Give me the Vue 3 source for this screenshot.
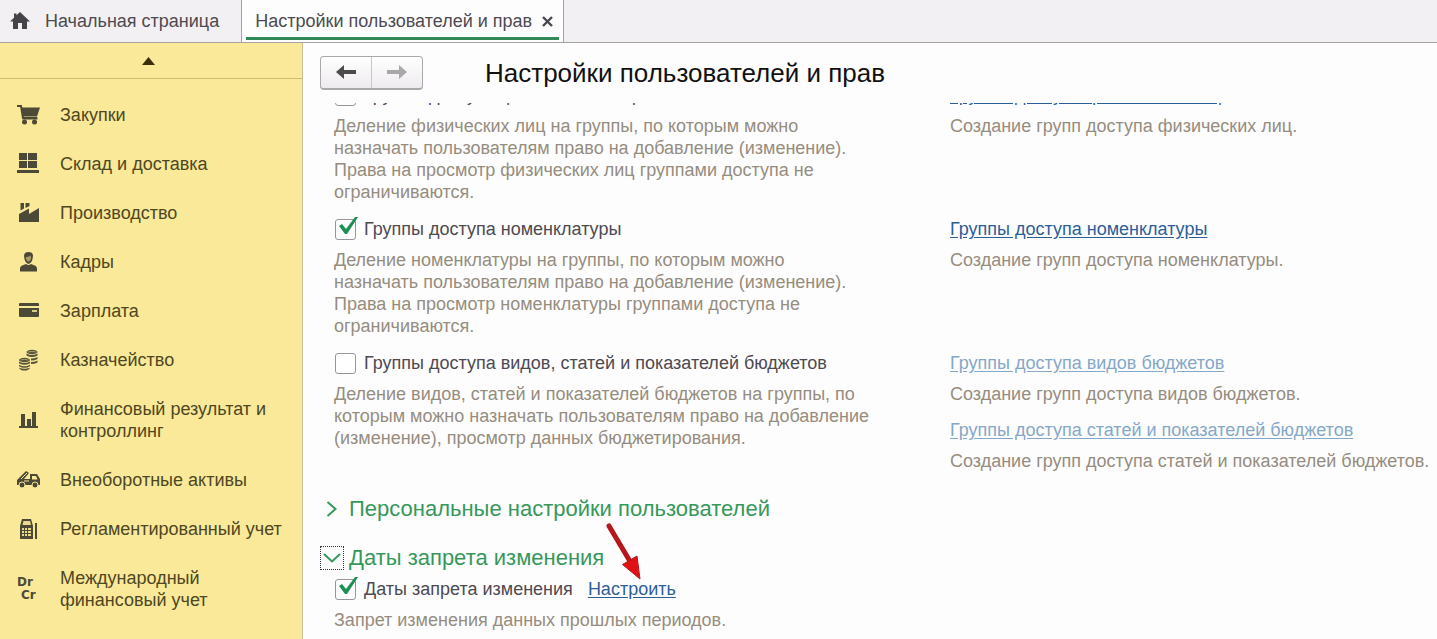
<script setup>
import { ref } from 'vue'

const menu = [
  { id: 'cart', label: 'Закупки' },
  { id: 'stock', label: 'Склад и доставка' },
  { id: 'factory', label: 'Производство' },
  { id: 'person', label: 'Кадры' },
  { id: 'card', label: 'Зарплата' },
  { id: 'coins', label: 'Казначейство' },
  { id: 'chart', label: 'Финансовый результат и контроллинг' },
  { id: 'truck', label: 'Внеоборотные активы' },
  { id: 'calc', label: 'Регламентированный учет' },
  { id: 'drcr', label: 'Международный финансовый учет' },
]

const rows = ref([
  {
    id: 'people',
    label: 'Группы доступа физических лиц',
    checked: false,
    text: 'Деление физических лиц на группы, по которым можно назначать пользователям право на добавление (изменение). Права на просмотр физических лиц группами доступа не ограничиваются.',
    links: [{ title: 'Группы доступа физических лиц', text: 'Создание групп доступа физических лиц.' }],
  },
  {
    id: 'items',
    label: 'Группы доступа номенклатуры',
    checked: true,
    text: 'Деление номенклатуры на группы, по которым можно назначать пользователям право на добавление (изменение). Права на просмотр номенклатуры группами доступа не ограничиваются.',
    links: [{ title: 'Группы доступа номенклатуры', text: 'Создание групп доступа номенклатуры.' }],
  },
  {
    id: 'budgets',
    label: 'Группы доступа видов, статей и показателей бюджетов',
    checked: false,
    muted: true,
    text: 'Деление видов, статей и показателей бюджетов на группы, по которым можно назначать пользователям право на добавление (изменение), просмотр данных бюджетирования.',
    links: [
      { title: 'Группы доступа видов бюджетов', text: 'Создание групп доступа видов бюджетов.' },
      { title: 'Группы доступа статей и показателей бюджетов', text: 'Создание групп доступа статей и показателей бюджетов.' },
    ],
  },
])
const datesLocked = ref(true)
</script>

<template>
  <div class="app">
    <nav class="tabs">
      <a class="tab home" href="#">
        <svg width="20" height="18" viewBox="0 0 20 18"><path d="M10 0 20 9.500H17V17H12V11H8V17H3V9.500H0L4 5.700V1.500H6.500V3.300Z" fill="#454347" /></svg>
        <span>Начальная страница</span>
      </a>
      <div class="tab active">
        <a href="#">Настройки пользователей и прав</a>
        <button class="close" aria-label="Закрыть">
          <svg width="11" height="11" viewBox="0 0 11 11"><path d="M1 1 10 10M10 1 1 10" stroke="#4a484c" stroke-width="2.400" /></svg>
        </button>
      </div>
    </nav>

    <div class="body">
      <aside class="side">
        <button class="up" aria-label="Прокрутить вверх">
          <svg width="13" height="8" viewBox="0 0 13 8"><path d="M6.500 0 13 8H0Z" fill="#3b2f08" /></svg>
        </button>
        <ul class="menu">
          <li v-for="m in menu" :key="m.id">
            <a href="#">
              <span class="icon">
                <svg v-if="m.id === 'cart'" width="24" height="22" viewBox="0 0 24 22"><path d="M0 2H4L6 14H20" fill="none" stroke="#4d4937" stroke-width="2" /><path d="M4.500 3.500H23L20 12.500H6Z" fill="#4d4937" /><path d="M5.500 13.500H20.500V15.500H5.500Z" fill="#4d4937" /><circle cx="7.500" cy="18" r="2.500" fill="#4d4937" /><circle cx="17.500" cy="18" r="2.500" fill="#4d4937" /></svg>
                <svg v-else-if="m.id === 'stock'" width="24" height="22" viewBox="0 0 24 22" fill="#4d4937"><path d="M2 0H10V7H2ZM11 0H20V7H11ZM2 8H10V15H2ZM11 8H20V15H11ZM0 17H22V20H0Z" /></svg>
                <svg v-else-if="m.id === 'factory'" width="24" height="22" viewBox="0 0 24 22" fill="#4d4937"><path d="M2 20V12L12 6.500V12L22 6V20ZM3.500 1H7V6.500L3.500 8.500ZM8.500 1H12.500V4L8.500 6Z" /></svg>
                <svg v-else-if="m.id === 'person'" width="24" height="22" viewBox="0 0 24 22" fill="#4d4937"><path d="M3 20.500V17Q3.500 14.300 6.500 14L9 13Q11.500 15 14 13L16.500 14Q19.500 14.300 20 17V20.500Z" /><path d="M7 5Q7 1 11.500 1Q16 1 16 5L15.500 8Q14.700 12 11.500 13Q8.300 12 7.500 8Z" /><path d="M9 6Q11.500 6 13.500 4.500L14.100 7Q13.800 9.800 11.500 11Q9.200 9.800 8.800 7Z" fill="#a89d6c" /></svg>
                <svg v-else-if="m.id === 'card'" width="24" height="22" viewBox="0 0 24 22" fill="#4d4937"><path d="M2 6V4Q2 3 3 3H21Q22 3 22 4V6ZM2 8H22V16Q22 17 21 17H3Q2 17 2 16Z" /><path d="M15 10H20V12H15Z" fill="#d9cc88" /></svg>
                <svg v-else-if="m.id === 'coins'" width="24" height="22" viewBox="0 0 24 22"><g fill="#575239"><ellipse cx="15" cy="3" rx="5.500" ry="2.200" /><path d="M9.500 4.500Q15 7.500 20.500 4.500V6.500Q15 9.500 9.500 6.500ZM14 9.500Q18 9.500 20.500 8V10Q18 11.500 14 11.500ZM14 13Q18 13 20.500 11.500V13.500Q18 15 14 15Z" /><ellipse cx="7.500" cy="11" rx="5.500" ry="2.200" /><path d="M2 12.500Q7.500 15.500 13 12.500V14.300Q7.500 17.300 2 14.300ZM2 15.700Q7.500 18.700 13 15.700V17.300Q7.500 20.300 2 17.300ZM2 18.700Q7.500 21 13 18.700Q12 21.500 7.500 21.500T2 18.700Z" /></g><path d="M11 3Q15 1.800 19 3M3.500 11Q7.500 9.800 11.500 11" fill="none" stroke="#bdb17a" stroke-width=".8" /></svg>
                <svg v-else-if="m.id === 'chart'" width="24" height="22" viewBox="0 0 24 22" fill="#4d4937"><path d="M4 5H8V17H4ZM10 10H14V17H10ZM15 3H19V17H15ZM2 17H21V19H2Z" /></svg>
                <svg v-else-if="m.id === 'truck'" width="24" height="22" viewBox="0 0 24 22"><path d="M0 16V11L3 8 9 2 12 4 7 10H13V5H20L23 10V16Z" fill="#4d4937" /><path d="M4 10 10 4" stroke="#f9e999" stroke-width="1" /><path d="M15 7H19L20.500 10.500H15Z" fill="#f9e999" /><path d="M7 12H12" stroke="#f9e999" stroke-width="1" /><circle cx="5" cy="16" r="3" fill="#4d4937" stroke="#f9e999" /><circle cx="18" cy="16" r="3" fill="#4d4937" stroke="#f9e999" /></svg>
                <svg v-else-if="m.id === 'calc'" width="24" height="22" viewBox="0 0 24 22"><path d="M5 1H14L16 8V21H3V8ZM18 5H20V21H18Z" fill="#4d4937" /><path d="M6.500 3H13L14 7H5.500ZM5 10H7V12H5ZM8 10H10V12H8ZM11 10H14V12H11ZM5 13H7V15H5ZM8 13H10V15H8ZM11 13H14V15H11ZM5 16H7V18H5ZM8 16H10V18H8ZM11 16H14V18H11Z" fill="#e9da8e" /></svg>
                <span v-else class="drcr"><b>Dr</b><b class="cr">Cr</b></span>
              </span>
              <span class="name">{{ m.label }}</span>
            </a>
          </li>
        </ul>
      </aside>

      <main class="main">
        <header class="head">
          <div class="history">
            <button aria-label="Назад"><svg width="20" height="14" viewBox="0 0 20 14"><path d="M0 7 8 0V5H20V9H8V14Z" fill="#4c4a4d" /></svg></button>
            <button aria-label="Вперед"><svg width="20" height="14" viewBox="0 0 20 14"><path d="M20 7 12 0V5H0V9H12V14Z" fill="#a9a7aa" /></svg></button>
          </div>
          <h1>Настройки пользователей и прав</h1>
        </header>

        <div class="scroll">
          <div class="content">
            <section v-for="r in rows" :key="r.id" class="row">
              <div class="left">
                <div class="check">
                  <input :id="r.id" v-model="r.checked" type="checkbox" />
                  <svg v-if="r.checked" class="tick" width="20" height="20" viewBox="0 0 20 20"><path d="M1 9 4 7 8 12 17 0H20L9 17H7Z" fill="#1b8f54" /></svg>
                  <label :for="r.id">{{ r.label }}</label>
                </div>
                <p>{{ r.text }}</p>
              </div>
              <div class="right">
                <div v-for="l in r.links" :key="l.title">
                  <a href="#" :class="{ muted: r.muted }">{{ l.title }}</a>
                  <p>{{ l.text }}</p>
                </div>
              </div>
            </section>

            <h2>
              <button aria-expanded="false">
                <span class="chev"><svg width="12" height="16" viewBox="0 0 12 16"><path d="M1.500 1 9.500 8 1.500 15" fill="none" stroke="#35985b" stroke-width="2" /></svg></span>
                Персональные настройки пользователей
              </button>
            </h2>
            <h2>
              <button aria-expanded="true">
                <span class="chev focus"><svg width="18" height="12" viewBox="0 0 18 12"><path d="M1 2 9 9.500 17 2" fill="none" stroke="#35985b" stroke-width="2" /></svg></span>
                Даты запрета изменения
              </button>
            </h2>
            <div class="dates">
              <div class="check">
                <input id="dates" v-model="datesLocked" type="checkbox" />
                <svg v-if="datesLocked" class="tick" width="20" height="20" viewBox="0 0 20 20"><path d="M1 9 4 7 8 12 17 0H20L9 17H7Z" fill="#1b8f54" /></svg>
                <label for="dates">Даты запрета изменения</label>
                <span class="setup">
                  <a href="#">Настроить</a>
                  <svg class="pointer" width="40" height="60" viewBox="0 0 40 60"><path d="M4 4 26 41" stroke="#b5171d" stroke-width="5" stroke-linecap="round" /><path d="M35 57 17.500 42.500 32 34Z" fill="#e01114" stroke="#b5171d" stroke-width="1" /></svg>
                </span>
              </div>
              <p>Запрет изменения данных прошлых периодов.</p>
            </div>
          </div>
        </div>
      </main>
    </div>
  </div>
</template>

<style>
body {
  margin: 0;
}
</style>

<style scoped>
.app {
  display: flex;
  flex-direction: column;
  height: 100vh;
  overflow: hidden;
  background: #fefdfe;
  color: #4d4a50;
  font: 18px/22px "Liberation Sans", Arial, sans-serif;
}
button {
  padding: 0;
  border: 0;
  background: none;
  font: inherit;
  color: inherit;
}
svg {
  display: block;
  flex: none;
}
p {
  margin: 9px 0 0;
  color: #958d7e;
}
.tabs {
  display: flex;
  flex: none;
  height: 43px;
  background: #f2f0f2;
  border-bottom: 1px solid #a5a2a0;
  box-sizing: border-box;
}
.tab {
  display: flex;
  align-items: center;
  box-sizing: border-box;
  white-space: nowrap;
}
.tab a,
a.tab {
  color: #4d4a50;
  text-decoration: none;
}
.home {
  gap: 15px;
  padding: 0 22px 0 10px;
}
.active {
  gap: 10px;
  height: 43px;
  padding: 0 10px 0 13px;
  border: solid #a5a2a0;
  border-width: 0 1px 1px;
  background: linear-gradient(#2f8a57, #2f8a57) 4px 37px / calc(100% - 8px) 3px no-repeat #fefdfe;
}
.body {
  display: flex;
  flex: 1;
  min-height: 0;
}
.side {
  flex: none;
  width: 303px;
  box-sizing: border-box;
  overflow: hidden;
  background: #f9e999;
  border-right: 1px solid #c9be96;
}
.up {
  display: flex;
  align-items: center;
  justify-content: center;
  width: 100%;
  height: 36px;
  padding-right: 5px;
  border-bottom: 1px solid #cdbd72;
}
.menu {
  display: flex;
  flex-direction: column;
  gap: 27px;
  margin: 0;
  padding: 25px 8px 0 17px;
  list-style: none;
}
.menu a {
  display: flex;
  align-items: center;
  gap: 19px;
  color: #4f4722;
  text-decoration: none;
}
.icon {
  flex: none;
  width: 24px;
}
.name {
  flex: 1;
}
.drcr {
  display: flex;
  flex-direction: column;
  color: #4d4937;
  font: 12px/13px "DejaVu Sans", sans-serif;
}
.cr {
  padding-left: 4px;
}
.main {
  display: flex;
  flex: 1;
  flex-direction: column;
  min-width: 0;
}
.head {
  display: flex;
  flex: none;
  align-items: center;
  gap: 62px;
  box-sizing: border-box;
  height: 60px;
  padding: 0 0 1px 17px;
}
.history {
  display: flex;
  box-sizing: border-box;
  width: 103px;
  height: 34px;
  border: 1px solid #aaa8ab;
  border-bottom-width: 2px;
  border-radius: 4px;
  background: linear-gradient(#fff, #eeebee);
}
.history button {
  display: flex;
  flex: 1;
  align-items: center;
  justify-content: center;
}
.history button + button {
  border-left: 1px solid #c8c6c9;
}
h1 {
  margin: 0;
  color: #111;
  font-size: 26px;
  font-weight: 400;
  line-height: 30px;
}
.scroll {
  flex: 1;
  min-height: 0;
  overflow: hidden;
}
.content {
  margin-top: -19px;
}
.row {
  display: grid;
  grid-template-columns: 537px 1fr;
  column-gap: 79px;
  padding: 0 0 15px 31px;
}
.right {
  display: flex;
  flex-direction: column;
  gap: 14px;
  white-space: nowrap;
}
.right a,
.setup a {
  color: #2b5f98;
  text-underline-offset: 2px;
}
.right a.muted {
  color: #84a8c8;
}
.check {
  position: relative;
  display: flex;
  align-items: center;
  height: 22px;
}
.check input {
  appearance: none;
  box-sizing: border-box;
  width: 21px;
  height: 21px;
  margin: 0 8px 0 1px;
  border: 1px solid #97959a;
  border-radius: 3px;
  background: #fff;
}
.tick {
  position: absolute;
  left: 4px;
  top: -1px;
  pointer-events: none;
}
h2 {
  margin: 0;
  padding: 0 0 21px 17px;
  color: #35985b;
  font-size: 22px;
  font-weight: 400;
  line-height: 28px;
}
.row + h2 {
  padding-top: 8px;
}
h2 + h2 {
  padding-bottom: 6px;
}
h2 button {
  display: flex;
  align-items: center;
  gap: 5px;
}
.chev {
  display: flex;
  align-items: center;
  justify-content: center;
  box-sizing: border-box;
  width: 24px;
  height: 24px;
}
.focus {
  border: 1px dotted #333;
}
.dates {
  padding-left: 31px;
}
.setup {
  position: relative;
  margin-left: 15px;
}
.pointer {
  position: absolute;
  left: 17px;
  top: -56px;
  pointer-events: none;
}
</style>
